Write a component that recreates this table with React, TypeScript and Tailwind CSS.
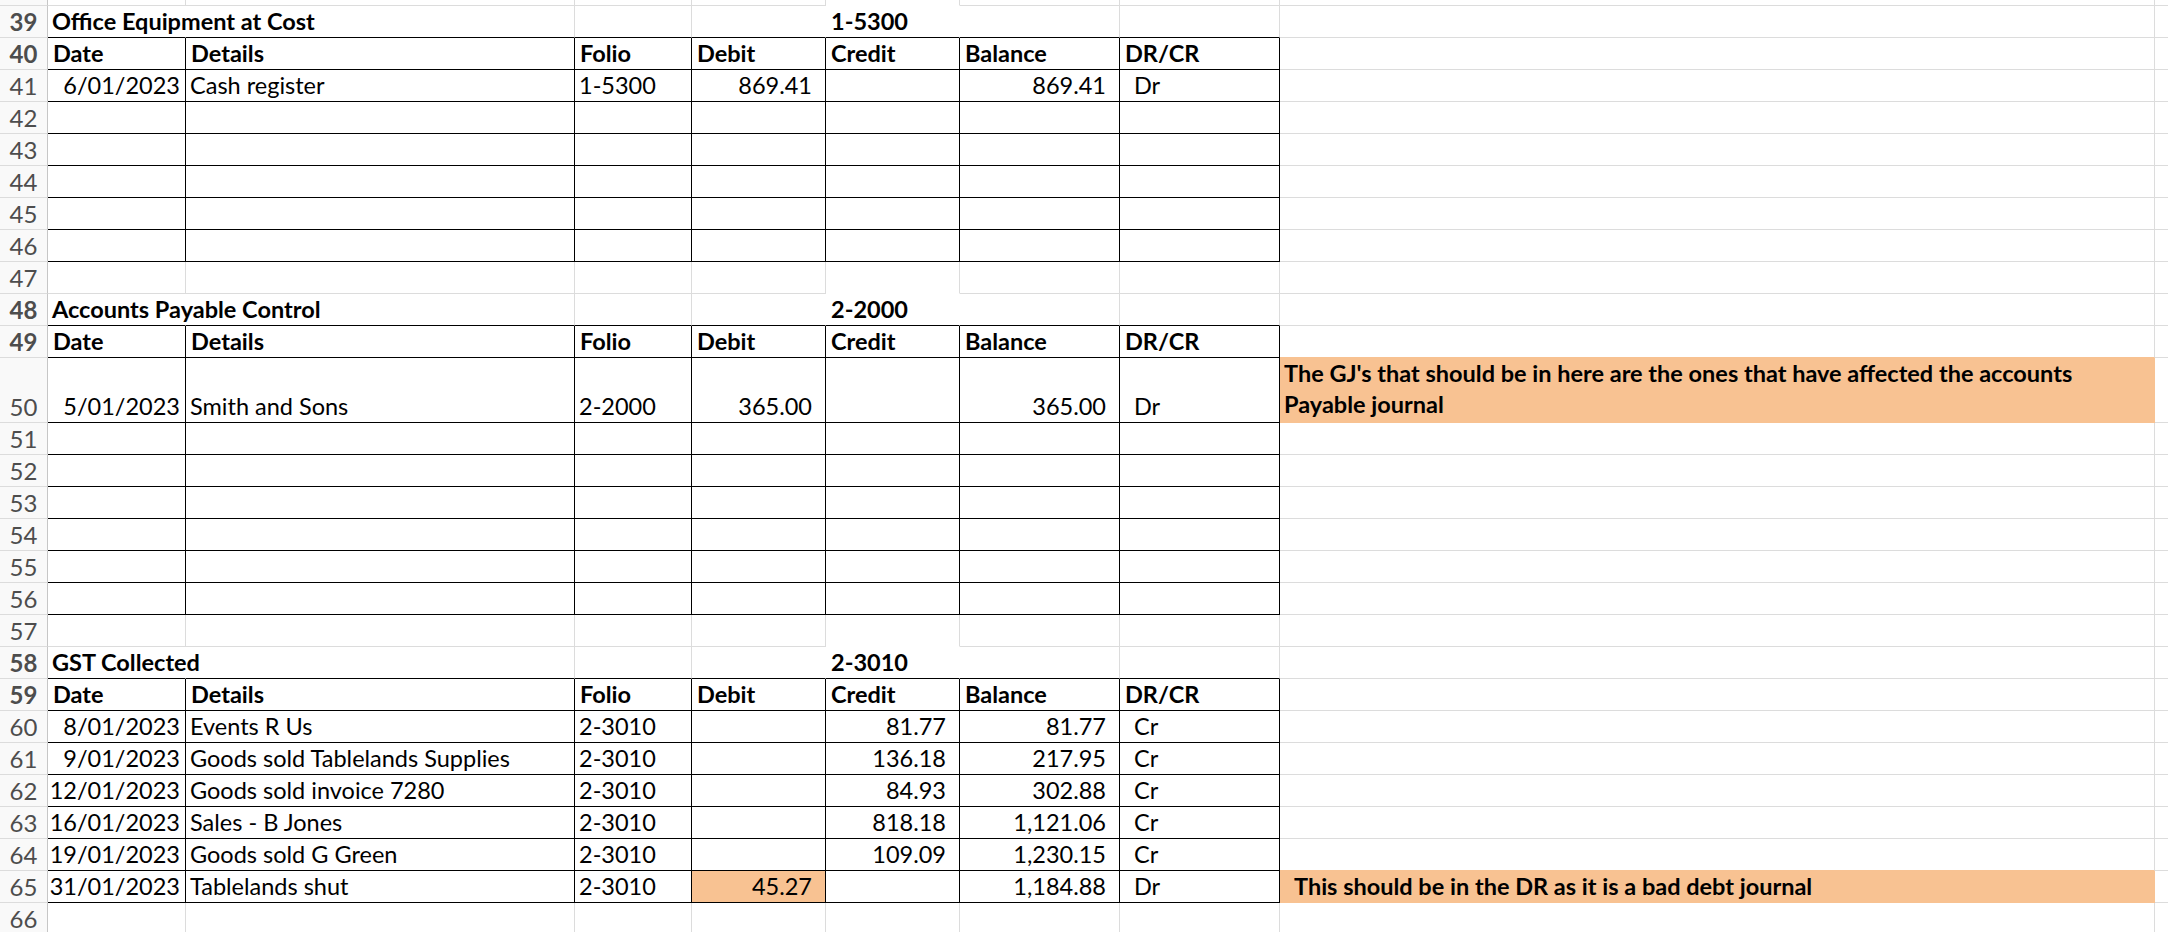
import React from 'react'

// column widths (each includes its 1px right border)
const COL = ['w-[138px]', 'w-[389px]', 'w-[117px]', 'w-[134px]', 'w-[134px]', 'w-[160px]', 'w-[160px]', 'w-[875px]']

const GRID = 'border-[#dcdcdc]'
const ORANGE = 'bg-[#f8c292]'

type Entry = {
  n: number
  date?: string
  details?: string
  folio?: string
  debit?: string
  credit?: string
  balance?: string
  drcr?: string
  note?: string
  tall?: boolean
  debitHl?: boolean
}

type Block = {
  title: string
  code: string
  headNum: number
  rows: Entry[]
}

const blocks: Block[] = [
  {
    title: 'Office Equipment at Cost',
    code: '1-5300',
    headNum: 40,
    rows: [
      { n: 41, date: '6/01/2023', details: 'Cash register', folio: '1-5300', debit: '869.41', balance: '869.41', drcr: 'Dr' },
      { n: 42 },
      { n: 43 },
      { n: 44 },
      { n: 45 },
      { n: 46 },
    ],
  },
  {
    title: 'Accounts Payable Control',
    code: '2-2000',
    headNum: 49,
    rows: [
      {
        n: 50,
        date: '5/01/2023',
        details: 'Smith and Sons',
        folio: '2-2000',
        debit: '365.00',
        balance: '365.00',
        drcr: 'Dr',
        tall: true,
        note: "The GJ's that should be in here are the ones that have affected the accounts|Payable journal",
      },
      { n: 51 },
      { n: 52 },
      { n: 53 },
      { n: 54 },
      { n: 55 },
      { n: 56 },
    ],
  },
  {
    title: 'GST Collected',
    code: '2-3010',
    headNum: 59,
    rows: [
      { n: 60, date: '8/01/2023', details: 'Events R Us', folio: '2-3010', credit: '81.77', balance: '81.77', drcr: 'Cr' },
      { n: 61, date: '9/01/2023', details: 'Goods sold Tablelands Supplies', folio: '2-3010', credit: '136.18', balance: '217.95', drcr: 'Cr' },
      { n: 62, date: '12/01/2023', details: 'Goods sold invoice 7280', folio: '2-3010', credit: '84.93', balance: '302.88', drcr: 'Cr' },
      { n: 63, date: '16/01/2023', details: 'Sales - B Jones', folio: '2-3010', credit: '818.18', balance: '1,121.06', drcr: 'Cr' },
      { n: 64, date: '19/01/2023', details: 'Goods sold G Green', folio: '2-3010', credit: '109.09', balance: '1,230.15', drcr: 'Cr' },
      {
        n: 65,
        date: '31/01/2023',
        details: 'Tablelands shut',
        folio: '2-3010',
        debit: '45.27',
        balance: '1,184.88',
        drcr: 'Dr',
        debitHl: true,
        note: 'This should be in the DR as it is a bad debt journal',
      },
    ],
  },
]

function RowNum({ n, tall }: { n?: number; tall?: boolean }) {
  return (
    <div
      className={`w-[48px] shrink-0 flex items-end justify-center pb-[2px] text-[24px] border-r border-b border-r-[#c6c6c6] border-b-[#dcdcdc] bg-[#f9f9f9] text-[#4d4d4d] ${
        tall ? 'h-[65px]' : 'h-full'
      }`}
    >
      {n}
    </div>
  )
}

function Tail() {
  return <div className={`flex-1 border-b ${GRID}`} />
}

// plain row with no table borders (rows 47, 57, 66 and the clipped row at the top)
function GapRow({ n, preTitle, short }: { n?: number; preTitle?: boolean; short?: boolean }) {
  return (
    <div className={`flex ${short ? 'h-[6px]' : 'h-[32px]'}`}>
      <RowNum n={n} />
      {COL.map((w, i) => (
        <div
          key={i}
          className={`${w} shrink-0 border-r border-b ${GRID} ${preTitle && i === 4 ? 'border-b-white' : ''}`}
        />
      ))}
      <Tail />
    </div>
  )
}

function TitleRow({ n, title, code }: { n: number; title: string; code: string }) {
  return (
    <div className="flex h-[32px] font-bold">
      <RowNum n={n} />
      <div className={`${COL[0]} shrink-0 flex items-end pl-[4px] pb-[2px] whitespace-nowrap border-r border-b border-r-transparent border-b-black`}>
        {title}
      </div>
      <div className={`${COL[1]} shrink-0 border-r border-b border-r-[#dcdcdc] border-b-black`} />
      <div className={`${COL[2]} shrink-0 border-r border-b border-r-[#dcdcdc] border-b-black`} />
      <div className={`${COL[3]} shrink-0 border-r border-b border-r-white border-b-black`} />
      <div className={`${COL[4]} shrink-0 flex items-end pl-[5px] pb-[2px] border-r border-b border-r-white border-b-black`}>
        {code}
      </div>
      <div className={`${COL[5]} shrink-0 border-r border-b border-r-[#dcdcdc] border-b-black`} />
      <div className={`${COL[6]} shrink-0 border-r border-b border-r-[#dcdcdc] border-b-black`} />
      <div className={`${COL[7]} shrink-0 border-r border-b ${GRID}`} />
      <Tail />
    </div>
  )
}

function HeaderRow({ n, noteAbove }: { n: number; noteAbove?: boolean }) {
  const heads = ['Date', 'Details', 'Folio', 'Debit', 'Credit', 'Balance', 'DR/CR']
  return (
    <div className="flex h-[32px] font-bold">
      <RowNum n={n} />
      {heads.map((h, i) => (
        <div key={h} className={`${COL[i]} shrink-0 flex items-end pl-[5px] pb-[2px] border-r border-b border-black`}>
          {h}
        </div>
      ))}
      <div className={`${COL[7]} shrink-0 border-r border-b ${GRID} ${noteAbove ? 'border-b-[#f8c292]' : ''}`} />
      <Tail />
    </div>
  )
}

function DataRow({ r, noteBelow }: { r: Entry; noteBelow?: boolean }) {
  const cell = 'shrink-0 flex items-end pb-[2px] border-r border-b border-black'
  return (
    <div className={`flex ${r.tall ? 'h-[65px]' : 'h-[32px]'}`}>
      <RowNum n={r.n} tall={r.tall} />
      <div className={`${COL[0]} ${cell} justify-end pr-[5px]`}>{r.date}</div>
      <div className={`${COL[1]} ${cell} pl-[4px] whitespace-nowrap`}>{r.details}</div>
      <div className={`${COL[2]} ${cell} pl-[4px]`}>{r.folio}</div>
      <div className={`${COL[3]} ${cell} justify-end pr-[13px] ${r.debitHl ? ORANGE : ''}`}>{r.debit}</div>
      <div className={`${COL[4]} ${cell} justify-end pr-[13px]`}>{r.credit}</div>
      <div className={`${COL[5]} ${cell} justify-end pr-[13px]`}>{r.balance}</div>
      <div className={`${COL[6]} ${cell} pl-[14px]`}>{r.drcr}</div>
      {r.note ? (
        <div
          className={`${COL[7]} shrink-0 flex flex-col justify-end pb-[2px] font-bold border-r border-b border-[#f8c292] ${ORANGE} ${
            r.tall ? 'pl-[4px] leading-[31px]' : 'pl-[14px]'
          }`}
        >
          {r.note.split('|').map((line) => (
            <span key={line} className="whitespace-nowrap">
              {line}
            </span>
          ))}
        </div>
      ) : (
        <div className={`${COL[7]} shrink-0 border-r border-b ${GRID} ${noteBelow ? 'border-b-[#f8c292]' : ''}`} />
      )}
      <Tail />
    </div>
  )
}

export default function App() {
  return (
    <div className="h-[932px] w-[2168px] overflow-hidden bg-white text-black text-[23.5px] leading-[27px] font-['Lato','Liberation_Sans',sans-serif]">
      <GapRow short preTitle />
      <TitleRow n={39} title={blocks[0].title} code={blocks[0].code} />
      <HeaderRow n={40} />
      {blocks[0].rows.map((r) => (
        <DataRow key={r.n} r={r} />
      ))}
      <GapRow n={47} preTitle />
      <TitleRow n={48} title={blocks[1].title} code={blocks[1].code} />
      <HeaderRow n={49} noteAbove />
      {blocks[1].rows.map((r) => (
        <DataRow key={r.n} r={r} />
      ))}
      <GapRow n={57} preTitle />
      <TitleRow n={58} title={blocks[2].title} code={blocks[2].code} />
      <HeaderRow n={59} />
      {blocks[2].rows.map((r) => (
        <DataRow key={r.n} r={r} noteBelow={r.n === 64} />
      ))}
      <GapRow n={66} />
    </div>
  )
}
